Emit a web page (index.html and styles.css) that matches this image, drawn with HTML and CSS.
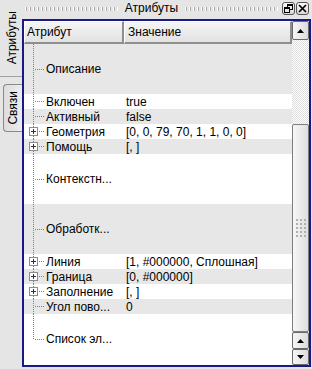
FILE: index.html
```html
<!DOCTYPE html>
<html>
<head>
<meta charset="utf-8">
<link rel="stylesheet" href="styles.css">
</head>
<body>
<div class="window">
  <div class="tabs">
    <div class="tab active"><span>Атрибуты</span></div>
    <div class="tab other"><span>Связи</span></div>
  </div>
  <div class="dock">
    <div class="titlebar">
      <div class="grip"></div>
      <div class="title">Атрибуты</div>
      <div class="grip"></div>
      <div class="tbtns">
        <div class="tbtn">
          <svg width="11" height="11" viewBox="0 0 11 11" shape-rendering="crispEdges">
            <rect x="4.5" y="1.5" width="5" height="5" fill="none" stroke="#000"/>
            <rect x="4" y="1" width="6" height="2" fill="#000"/>
            <rect x="1.5" y="4.5" width="5" height="5" fill="#e6e6e6" stroke="#000"/>
            <rect x="1" y="4" width="6" height="2" fill="#000"/>
          </svg>
        </div>
        <div class="tbtn">
          <svg width="11" height="11" viewBox="0 0 11 11">
            <path d="M2 2L9 9M9 2L2 9" stroke="#000" stroke-width="1.7" fill="none"/>
          </svg>
        </div>
      </div>
    </div>
    <div class="frame">
      <div class="view">
        <div class="header">
          <div class="hcell c1">Атрибут</div>
          <div class="hcell c2">Значение</div>
        </div>
        <div class="rows">
          <div class="row tall alt"><div class="name"><span class="branch"></span>Описание</div><div class="val"></div></div>
          <div class="row"><div class="name"><span class="branch"></span>Включен</div><div class="val">true</div></div>
          <div class="row alt"><div class="name"><span class="branch"></span>Активный</div><div class="val">false</div></div>
          <div class="row"><div class="name"><span class="branch"><span class="box"></span></span>Геометрия</div><div class="val">[0, 0, 79, 70, 1, 1, 0, 0]</div></div>
          <div class="row alt"><div class="name"><span class="branch"><span class="box"></span></span>Помощь</div><div class="val">[, ]</div></div>
          <div class="row tall"><div class="name"><span class="branch"></span>Контекстн...</div><div class="val"></div></div>
          <div class="row tall alt"><div class="name"><span class="branch"></span>Обработк...</div><div class="val"></div></div>
          <div class="row"><div class="name"><span class="branch"><span class="box"></span></span>Линия</div><div class="val">[1, #000000, Сплошная]</div></div>
          <div class="row alt"><div class="name"><span class="branch"><span class="box"></span></span>Граница</div><div class="val">[0, #000000]</div></div>
          <div class="row"><div class="name"><span class="branch"><span class="box"></span></span>Заполнение</div><div class="val">[, ]</div></div>
          <div class="row alt"><div class="name"><span class="branch"></span>Угол пово...</div><div class="val">0</div></div>
          <div class="row tall"><div class="name"><span class="branch last"></span>Список эл...</div><div class="val"></div></div>
        </div>
      </div>
      <div class="vscroll">
        <div class="sbtn top">
          <svg width="7" height="4" viewBox="0 0 7 4"><path d="M3.5 0L7 4H0Z" fill="#000"/></svg>
        </div>
        <div class="track"></div>
        <div class="slider">
          <svg width="11" height="19" viewBox="0 0 11 19" shape-rendering="crispEdges">
            <g fill="#b0b0b0">
              <rect x="0" y="0" width="2" height="2"/><rect x="4" y="0" width="2" height="2"/><rect x="8" y="0" width="2" height="2"/>
              <rect x="0" y="4" width="2" height="2"/><rect x="4" y="4" width="2" height="2"/><rect x="8" y="4" width="2" height="2"/>
              <rect x="0" y="8" width="2" height="2"/><rect x="4" y="8" width="2" height="2"/><rect x="8" y="8" width="2" height="2"/>
              <rect x="0" y="12" width="2" height="2"/><rect x="4" y="12" width="2" height="2"/><rect x="8" y="12" width="2" height="2"/>
              <rect x="0" y="16" width="2" height="2"/><rect x="4" y="16" width="2" height="2"/><rect x="8" y="16" width="2" height="2"/>
            </g>
          </svg>
        </div>
        <div class="sbtn up">
          <svg width="7" height="4" viewBox="0 0 7 4"><path d="M3.5 0L7 4H0Z" fill="#000"/></svg>
        </div>
        <div class="sbtn down">
          <svg width="7" height="4" viewBox="0 0 7 4"><path d="M0 0H7L3.5 4Z" fill="#000"/></svg>
        </div>
      </div>
    </div>
  </div>
</div>
</body>
</html>
```

FILE: styles.css
```css
* { box-sizing: border-box; }

body {
  margin: 0;
  background: #e5e5e5;
  font-family: "Liberation Sans", Arial, sans-serif;
  font-size: 12px;
  color: #000;
}

.window {
  display: flex;
  width: 312px;
  height: 369px;
}

/* left vertical tabs */
.tabs {
  width: 22px;
  flex: none;
  display: flex;
  flex-direction: column;
}

.tab {
  display: flex;
  align-items: center;
  justify-content: center;
}

.tab span {
  writing-mode: vertical-rl;
  transform: rotate(180deg);
  white-space: nowrap;
}

.tab.active {
  height: 77px;
  border-bottom: 1px solid #a2a2a2;
  padding-left: 1px;
}

.tab.other {
  margin-top: 7px;
  margin-left: 3px;
  height: 48px;
  border: 1px solid #8a8a8a;
  border-right: none;
  border-radius: 4px 0 0 4px;
  background: linear-gradient(to right, #dedede, #ececec);
}

/* dock */
.dock {
  flex: 1;
  display: flex;
  flex-direction: column;
}

.titlebar {
  height: 17px;
  margin-bottom: 2px;
  display: flex;
  align-items: center;
  padding: 0 3px 0 3px;
}

.grip {
  flex: 1;
  height: 4px;
  background-image:
    linear-gradient(90deg, #ffffff 1px, transparent 1px),
    linear-gradient(90deg, #aaaaaa 1px, transparent 1px);
  background-size: 4px 2px, 4px 2px;
  background-position: 0 0, 1px 1px;
}

.title {
  margin: 0 7px;
  line-height: 17px;
}

.tbtns {
  display: flex;
  gap: 1px;
  margin-left: 4px;
}

.tbtn {
  width: 13px;
  height: 13px;
  border: 1px solid #555;
  border-radius: 3px;
  background: linear-gradient(#fafafa, #dadada);
  display: flex;
}

/* frame */
.frame {
  height: 348px;
  margin-right: 1px;
  border: 2px solid #1a1a86;
  display: flex;
}

.view {
  flex: 1;
  display: flex;
  flex-direction: column;
  background: #fff;
}

.header {
  height: 23px;
  display: flex;
  flex: none;
}

.hcell {
  border-top: 1px solid #fff;
  border-left: 1px solid #fff;
  border-right: 2px solid #8e8e8e;
  border-bottom: 2px solid #8e8e8e;
  background: linear-gradient(#f5f5f5, #e2e2e2);
  display: flex;
  align-items: center;
  padding-left: 2px;
}

.hcell.c1 { width: 100px; }
.hcell.c2 { flex: 1; padding-left: 3px; }

.rows {
  display: flex;
  flex-direction: column;
}

.row {
  height: 15px;
  display: flex;
  background: #fff;
}

.row.tall { height: 50px; }
.row.alt { background: #e7e7e7; }

.name {
  width: 100px;
  display: flex;
  align-items: center;
  white-space: nowrap;
}

.val {
  flex: 1;
  display: flex;
  align-items: center;
  padding-left: 2px;
  white-space: nowrap;
}

.branch {
  width: 20px;
  align-self: stretch;
  position: relative;
  margin-right: 2px;
}

.branch::before {
  content: "";
  position: absolute;
  left: 9px;
  top: 0;
  bottom: 0;
  width: 1px;
  background: repeating-linear-gradient(to bottom, #7f7f7f 0 1px, transparent 1px 2px);
}

.branch.last::before {
  bottom: 50%;
}

.branch::after {
  content: "";
  position: absolute;
  left: 10px;
  top: calc(50% - 0.5px);
  width: 10px;
  height: 1px;
  background: repeating-linear-gradient(to right, transparent 0 1px, #7f7f7f 1px 2px);
}

.box {
  position: absolute;
  left: 5px;
  top: calc(50% - 4.5px);
  width: 9px;
  height: 9px;
  border: 1px solid #8c8c8c;
  background:
    linear-gradient(#333, #333) center / 5px 1px no-repeat,
    linear-gradient(#333, #333) center / 1px 5px no-repeat,
    #fff;
  z-index: 1;
}

/* scrollbar */
.vscroll {
  width: 17px;
  flex: none;
  display: flex;
  flex-direction: column;
  background: #e5e5e5;
}

.sbtn {
  border: 1px solid #6a6a6a;
  border-radius: 2px;
  background: linear-gradient(to right, #f7f7f7, #dcdcdc);
  display: flex;
  align-items: center;
  justify-content: center;
}

.sbtn.top { height: 19px; }
.sbtn.up { height: 17px; }
.sbtn.down { height: 16px; }

.track {
  height: 84px;
  background: repeating-conic-gradient(#ffffff 0 25%, #dcdcdc 0 50%) 0 0 / 2px 2px;
}

.slider {
  height: 208px;
  border: 1px solid #7d7d7d;
  border-radius: 2px;
  background: linear-gradient(to right, #f7f7f7, #dedede);
  display: flex;
  align-items: center;
  justify-content: center;
  padding-left: 1px;
}
```
